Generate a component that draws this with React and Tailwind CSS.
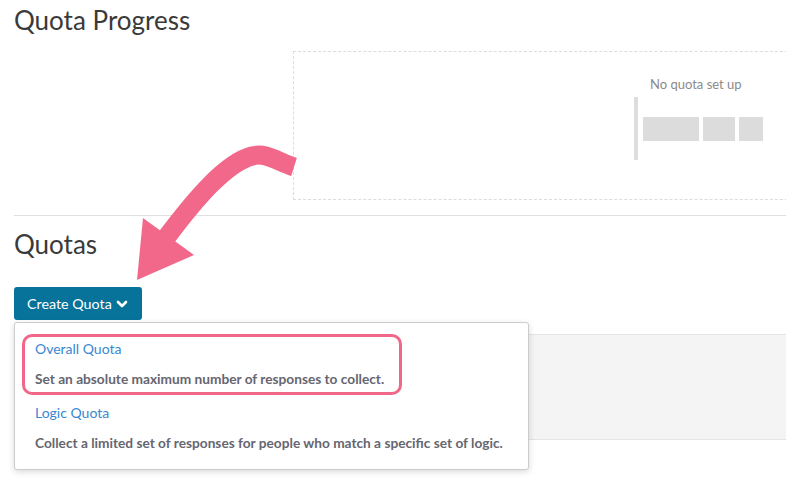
import React from 'react';

const Arrow = () => (
  <svg className="absolute left-0 top-0 pointer-events-none" width="786" height="480" viewBox="0 0 786 480">
    <path
      d="M 294 167 C 278 162, 266 152, 252 156 C 226 163, 196 198, 166 238"
      fill="none"
      stroke="#f2688a"
      strokeWidth="19"
    />
    <polygon points="143,218 137,280 194,255" fill="#f2688a" />
  </svg>
);

const QuotaOption = ({ title, desc }) => (
  <div className="px-[20px] py-[5px]">
    <div className="text-[14px] leading-[24px] text-[#3a87d2]">{title}</div>
    <div className="mt-[6px] whitespace-nowrap text-[13.7px] leading-[24px] font-bold text-[#666670]">{desc}</div>
  </div>
);

export default function App() {
  return (
    <div className="relative w-full h-[480px] overflow-hidden bg-white font-['Lato',sans-serif] text-[#333]">
      <div className="pl-[14px]">
        <h1 className="pt-[4px] text-[26px] leading-[32px] text-[#3a3a3a]">Quota Progress</h1>

        <div className="mt-[15px] ml-[279px] w-[520px] h-[149px] border border-dashed border-[#dcdcdc] border-r-0">
          <div className="pl-[356px] pt-[22px] text-[13px] leading-[20px] text-[#8a8a8a]">No quota set up</div>
          <div className="ml-[340px] mt-[3px] flex h-[63px] border-l-[4px] border-[#dddddd]">
            <div className="ml-[5px] mt-[20px] flex gap-[4px] h-[24px]">
              <div className="w-[56px] bg-[#dcdcdc]" />
              <div className="w-[32px] bg-[#dcdcdc]" />
              <div className="w-[24px] bg-[#dcdcdc]" />
            </div>
          </div>
        </div>

        <div className="mt-[15px] border-t border-[#e0e0e0]" />

        <h2 className="mt-[12px] text-[26px] leading-[32px] text-[#3a3a3a]">Quotas</h2>

        <button className="mt-[27px] flex items-center gap-[4px] h-[33px] pl-[13px] pr-[14px] rounded-[3px] bg-[#08739a] text-white text-[14.3px]">
          Create Quota
          <svg width="12" height="12" viewBox="0 0 12 12" className="mt-[1px]">
            <path d="M2 4 L6 8 L10 4" fill="none" stroke="#fff" strokeWidth="2.6" strokeLinecap="round" strokeLinejoin="round" />
          </svg>
        </button>

        <div className="relative mt-[2px]">
          <div className="absolute left-0 right-0 top-[12px] h-[106px] bg-[#f4f4f4] border-y border-[#e4e4e4]" />
          <div className="relative w-[515px] rounded-[3px] border border-[#cccccc] bg-white shadow-[0_2px_6px_rgba(0,0,0,0.15)] py-[9px]">
            <QuotaOption title="Overall Quota" desc="Set an absolute maximum number of responses to collect." />
            <QuotaOption title="Logic Quota" desc="Collect a limited set of responses for people who match a specific set of logic." />
          </div>
        </div>
      </div>

      <div className="absolute left-[22px] top-[334px] w-[380px] h-[61px] rounded-[10px] border-[3px] border-[#f0678a] pointer-events-none" />
      <Arrow />
    </div>
  );
}
